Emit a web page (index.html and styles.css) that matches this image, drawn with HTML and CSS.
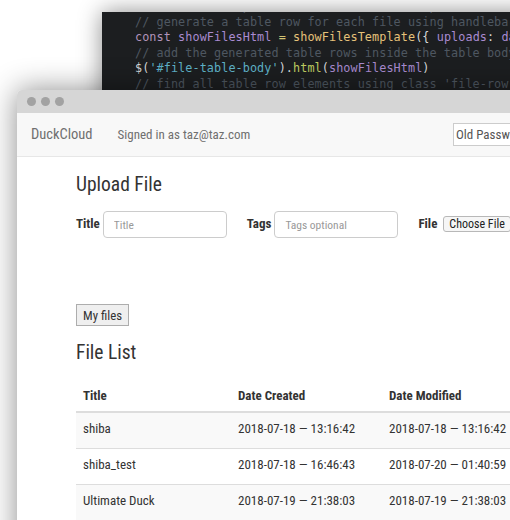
FILE: index.html
```html
<!DOCTYPE html>
<html>
<head>
<meta charset="utf-8">
<title>DuckCloud</title>
<link rel="stylesheet" href="styles.css">
</head>
<body>
<div class="desk">
  <div class="code-win">
<pre class="code"><span class="c">// render the uploads returned from the api</span>
<span class="c">// generate a table row for each file using handlebars</span>
<span class="k">const</span> <span class="v">showFilesHtml</span> <span class="o">=</span> <span class="f">showFilesTemplate</span><span class="p">({</span> <span class="v">uploads</span><span class="p">:</span> <span class="v">data</span><span class="p">.</span><span class="v">uploads</span> <span class="p">})</span>
<span class="c">// add the generated table rows inside the table body</span>
<span class="p">$(</span><span class="s">'#file-table-body'</span><span class="p">).</span><span class="m">html</span><span class="p">(</span><span class="v">showFilesHtml</span><span class="p">)</span>
<span class="c">// find all table row elements using class 'file-row'</span></pre>
  </div>

  <div class="browser">
    <div class="titlebar">
      <span class="dot"></span><span class="dot"></span><span class="dot"></span>
    </div>
    <nav class="navbar">
      <span class="brand">DuckCloud</span>
      <span class="navtext">Signed in as taz@taz.com</span>
      <input class="pw" type="password" placeholder="Old Password">
    </nav>
    <main class="content">
      <h3 class="heading">Upload File</h3>
      <form class="form-row">
        <label class="lbl">Title</label>
        <input class="field" type="text" placeholder="Title">
        <label class="lbl lbl-gap">Tags</label>
        <input class="field" type="text" placeholder="Tags optional">
        <label class="lbl lbl-gap">File</label>
        <span class="choose">Choose File</span>
      </form>
      <button class="myfiles" type="button">My files</button>
      <h3 class="heading heading-list">File List</h3>
      <table class="files">
        <thead>
          <tr><th class="col1">Title</th><th class="col2">Date Created</th><th>Date Modified</th></tr>
        </thead>
        <tbody>
          <tr><td>shiba</td><td>2018-07-18 — 13:16:42</td><td>2018-07-18 — 13:16:42</td></tr>
          <tr><td>shiba_test</td><td>2018-07-18 — 16:46:43</td><td>2018-07-20 — 01:40:59</td></tr>
          <tr><td>Ultimate Duck</td><td>2018-07-19 — 21:38:03</td><td>2018-07-19 — 21:38:03</td></tr>
        </tbody>
      </table>
    </main>
  </div>
</div>
</body>
</html>
```
FILE: styles.css
```css
html, body {
  margin: 0;
  padding: 0;
  background: #fff;
}
body {
  width: 510px;
  height: 520px;
  overflow: hidden;
  font-family: "Roboto Condensed", Roboto, "Liberation Sans", sans-serif;
  font-stretch: 75%;
  color: #333;
}
.desk {
  position: relative;
  width: 510px;
  height: 520px;
  overflow: hidden;
}
.code-win {
  position: absolute;
  left: 102px;
  top: 12px;
  width: 440px;
  height: 110px;
  background: #1c1e20;
  box-shadow: 0 0 22px rgba(0, 0, 0, 0.45);
  overflow: hidden;
}
.code {
  margin: -13px 0 0;
  padding-left: 33px;
  font-family: "DejaVu Sans Mono", monospace;
  font-size: 11.8px;
  letter-spacing: 0.08px;
  line-height: 15.5px;
  font-stretch: normal;
  color: #c8cacc;
  white-space: pre;
}
.code .c { color: #4e5761; }
.code .k { color: #b294bb; }
.code .v { color: #a98bd0; }
.code .o { color: #d3c473; }
.code .f { color: #e6c27a; }
.code .p { color: #d6d8da; }
.code .s { color: #5fb3c8; }
.code .m { color: #c0cf63; }

.browser {
  position: absolute;
  left: 17px;
  top: 90px;
  width: 540px;
  height: 470px;
  background: #fff;
  border-radius: 5px 5px 0 0;
  box-shadow: 0 0 30px rgba(0, 0, 0, 0.45);
  overflow: hidden;
}
.titlebar {
  height: 23px;
  background: #d6d6d6;
  display: flex;
  align-items: center;
  gap: 5px;
  padding-left: 10px;
}
.dot {
  width: 9px;
  height: 9px;
  border-radius: 50%;
  background: #a2a2a2;
}
.navbar {
  height: 43px;
  background: #f8f8f8;
  border-bottom: 1px solid #e7e7e7;
  display: flex;
  align-items: center;
  padding: 0 14px;
}
.brand {
  font-size: 14.5px;
  color: #6f6f6f;
  margin-right: 25px;
}
.navtext {
  font-size: 13px;
  color: #6f6f6f;
}
.pw {
  margin-left: auto;
  width: 90px;
  height: 23px;
  box-sizing: border-box;
  border: 1px solid #ccc;
  padding: 0 2px;
  font-family: inherit;
  font-stretch: 75%;
  font-size: 13px;
  background: #fff;
}
.pw::placeholder { color: #555; }

.content {
  padding: 16px 0 0 59px;
}
.heading {
  font-size: 19.5px;
  line-height: 24px;
  font-weight: 400;
  margin: 0 0 14px;
  color: #333;
}
.form-row {
  display: flex;
  align-items: center;
  height: 27px;
  margin: 0;
}
.lbl {
  font-size: 13px;
  font-weight: 700;
  color: #333;
  margin-right: 3px;
  margin-bottom: 3px;
}
.lbl-gap { margin-left: 20px; }
.field {
  width: 124px;
  height: 27px;
  box-sizing: border-box;
  border: 1px solid #ccc;
  border-radius: 4px;
  padding: 0 10px;
  font-family: inherit;
  font-stretch: 75%;
  font-size: 11.5px;
  color: #555;
  background: #fff;
}
.field::placeholder { color: #999; }
.choose {
  margin-left: 3px;
  margin-bottom: 2px;
  height: 16px;
  line-height: 14px;
  box-sizing: border-box;
  border: 1px solid #b8b8b8;
  border-radius: 3px;
  padding: 0 5px;
  font-size: 12px;
  background: #f6f6f6;
  color: #222;
  white-space: nowrap;
}
.myfiles {
  display: block;
  margin-top: 66px;
  height: 22px;
  padding: 0 6px;
  border: 1px solid #adadad;
  border-radius: 0;
  background: #efefef;
  font-family: inherit;
  font-stretch: 75%;
  font-size: 12.8px;
  color: #333;
}
.heading-list {
  margin: 15px 0 11px;
}
.files {
  border-collapse: separate;
  border-spacing: 0;
  width: 470px;
  font-size: 13px;
  color: #333;
}
.files th {
  text-align: left;
  font-weight: 700;
  padding: 10px 7px 6px;
  line-height: 19px;
  border-bottom: 2px solid #ddd;
}
.files .col1 { width: 141px; }
.files .col2 { width: 137px; }
.files td {
  padding: 6px 7px 10px;
  line-height: 19px;
  border-bottom: 1px solid #ddd;
  white-space: nowrap;
}
.files tbody tr:nth-child(odd) td { background: #f9f9f9; }
```
